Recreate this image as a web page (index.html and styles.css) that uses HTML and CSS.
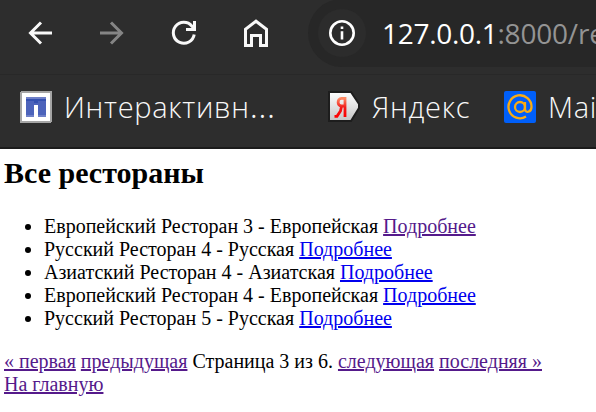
FILE: index.html
```html
<!DOCTYPE html>
<html lang="ru">
<head>
<meta charset="utf-8">
<title>Все рестораны</title>
<link rel="stylesheet" href="styles.css">
</head>
<body>
<header class="browser">
  <div class="toolbar">
    <svg class="nav-icon" viewBox="0 0 32 32"><path d="M28 16H7M17 5.500L6.500 16 17 26.500"/></svg>
    <svg class="nav-icon disabled" viewBox="0 0 32 32"><path d="M4 16h21M15 5.500L25.500 16 15 26.500"/></svg>
    <svg class="nav-icon" viewBox="0 0 32 32"><path d="M26.200 17.500A10.500 10.500 0 1 1 24 9.200L26 12M26.500 4v8.500H18"/></svg>
    <svg class="nav-icon" viewBox="0 0 32 32"><path d="M5.500 28.500V12.300L16 4.200l10.500 8.100v16.200h-6V18.500h-9v10z"/></svg>
    <div class="address">
      <span class="info"><svg viewBox="0 0 28 28"><circle cx="14" cy="14" r="11.700"/><path d="M14 12.200v8.300M14 7.400v2.700"/></svg></span>
      <span class="host">127.0.0.1</span><span class="path">:8000/re</span>
    </div>
  </div>
  <div class="bookmarks">
    <div class="bookmark first">
      <svg class="favicon" viewBox="0 0 32 32" shape-rendering="crispEdges"><rect width="32" height="32" rx="2" fill="#a5a5a5"/><rect x="2" y="2" width="28" height="28" fill="#fff"/><path fill="#4c63bb" d="M6 6h20v20h-8V14h-4v12H6z"/><path fill="#3450b0" d="M6 8h20v2H6zM14 10h4v2h-4z"/><path fill="#6f80c8" d="M6 6h20v2H6zM6 24h8v2H6zM18 24h8v2h-8z"/></svg>
      <span class="label">Интерактивн<span class="ellipsis">…</span></span>
    </div>
    <div class="bookmark second">
      <svg class="favicon" viewBox="0 0 32 32"><defs><linearGradient id="silver" x2="0" y2="1"><stop stop-color="#fff"/><stop offset="1" stop-color="#c4c4c4"/></linearGradient><linearGradient id="red" x2="0" y2="1"><stop stop-color="#ff8a64"/><stop offset=".5" stop-color="#f01818"/><stop offset="1" stop-color="#f00"/></linearGradient></defs><path fill="url(#silver)" stroke="#1d1d1d" stroke-width="2" d="M1 1h22l8 12v4l-8 13H1z"/><path fill="none" stroke="url(#red)" stroke-width="2.800" d="M17 26V7.400h-3.500C9 7.400 9 15 13.500 15H17M13.500 15.500L12.500 20 9 25.300H6.500"/></svg>
      <span class="label">Яндекс</span>
    </div>
    <div class="bookmark third">
      <svg class="favicon" viewBox="0 0 32 32"><rect width="32" height="32" rx="2" fill="#005ff9"/><g fill="none" stroke="#f9ab12" stroke-width="2.300"><circle cx="16" cy="16" r="5"/><path d="M21 11v7c0 4.500 6.500 3.500 6.500-2A11.500 11.500 0 1 0 22 25.600"/></g></svg>
      <span class="label">Mai</span>
    </div>
  </div>
</header>
<main class="page">
  <h2>Все рестораны</h2>
  <ul>
    <li>Европейский Ресторан 3 - Европейская <a class="visited" href="#">Подробнее</a></li>
    <li>Русский Ресторан 4 - Русская <a href="#">Подробнее</a></li>
    <li>Азиатский Ресторан 4 - Азиатская <a href="#">Подробнее</a></li>
    <li>Европейский Ресторан 4 - Европейская <a href="#">Подробнее</a></li>
    <li>Русский Ресторан 5 - Русская <a href="#">Подробнее</a></li>
  </ul>
  <div class="pagination">
    <a class="visited" href="#">« первая</a>
    <a class="visited" href="#">предыдущая</a>
    Страница 3 из 6.
    <a class="visited" href="#">следующая</a>
    <a class="visited" href="#">последняя »</a>
  </div>
  <a class="visited" href="#">На главную</a>
</main>
</body>
</html>
```
FILE: styles.css
```css
body {
  margin: 0;
  height: 412px;
  overflow: hidden;
  background: #fff;
  color: #000;
  font: 20px/23px "Liberation Serif", serif;
}
.browser {
  height: 149px;
  box-sizing: border-box;
  overflow: hidden;
  background: #2d2d2d;
  border-bottom: 2px solid #1b1b1b;
  color: #f8f8f8;
  font-family: "Open Sans", "Noto Sans", sans-serif;
  font-size: 28px;
  white-space: nowrap;
}
.toolbar {
  display: flex;
  height: 75px;
  box-sizing: border-box;
  padding-left: 24px;
  gap: 40px;
  border-bottom: 1px solid #282828;
}
.nav-icon {
  flex: none;
  width: 32px;
  height: 32px;
  margin-top: 17px;
  fill: none;
  stroke: #f8f8f8;
  stroke-width: 3;
}
.disabled { stroke: #858585; }
.address {
  flex: none;
  display: flex;
  align-items: center;
  width: 400px;
  height: 68px;
  margin: -1px 0 0 -4px;
  border-radius: 34px 0 0 34px;
  background: #272727;
}
.info {
  flex: none;
  display: flex;
  align-items: center;
  justify-content: center;
  width: 48px;
  height: 48px;
  margin: 0 16px 0 10px;
  border-radius: 50%;
  background: #2c2c2c;
}
.info svg {
  width: 28px;
  height: 28px;
  fill: none;
  stroke: #fff;
  stroke-width: 2.6;
}
.host {
  color: #fff;
  letter-spacing: -0.3px;
}
.path {
  color: #949494;
  letter-spacing: -0.2px;
}
.bookmarks {
  display: flex;
  align-items: center;
  height: 64px;
  padding-left: 20px;
}
.bookmark {
  flex: none;
  display: flex;
  align-items: center;
  gap: 12px;
}
.label {
  padding-bottom: 2px;
  font-weight: 350;
  font-size: 29px;
  letter-spacing: 0.7px;
}
.ellipsis {
  font-size: 36px;
  line-height: 0;
  letter-spacing: 0;
}
.first { width: 308px; }
.second { width: 176px; }
.favicon {
  flex: none;
  width: 32px;
  height: 32px;
}
.page { padding: 7px 4px 0; }
h2 {
  margin: 0 0 26px;
  font-size: 30px;
  line-height: 33px;
}
ul {
  margin: 0 0 20px;
  padding-left: 40px;
}
a { color: #0000ee; }
.visited { color: #551a8b; }
```
